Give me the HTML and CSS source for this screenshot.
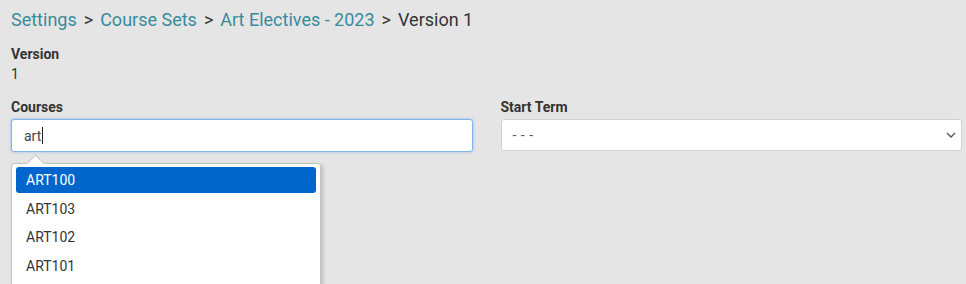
FILE: index.html
```html
<!DOCTYPE html>
<html lang="en">
<head>
<meta charset="utf-8">
<title>Version 1</title>
<link rel="stylesheet" href="styles.css">
</head>
<body>
<div class="page">
  <nav class="crumbs">
    <a class="crumb-link" href="#">Settings</a><span class="sep">&gt;</span><a class="crumb-link" href="#">Course Sets</a><span class="sep">&gt;</span><a class="crumb-link" href="#">Art Electives - 2023</a><span class="sep">&gt;</span><span class="crumb-current">Version 1</span>
  </nav>

  <div class="field-static">
    <div class="label">Version</div>
    <div class="value">1</div>
  </div>

  <div class="row">
    <div class="col">
      <div class="label">Courses</div>
      <div class="combo">
        <div class="text-input focused"><span class="typed">art</span><span class="caret"></span></div>
        <div class="menu">
          <div class="menu-arrow"></div>
          <ul class="menu-list">
            <li class="menu-item active">ART100</li>
            <li class="menu-item">ART103</li>
            <li class="menu-item">ART102</li>
            <li class="menu-item">ART101</li>
          </ul>
        </div>
      </div>
    </div>
    <div class="col">
      <div class="label">Start Term</div>
      <div class="select">
        <span class="select-text">- - -</span>
        <svg class="chevron" width="10" height="6" viewBox="0 0 10 6"><path d="M1 1 L5 5 L9 1" fill="none" stroke="#555" stroke-width="1.3"/></svg>
      </div>
    </div>
  </div>
</div>
</body>
</html>
```
FILE: styles.css
```css
html, body {
  margin: 0;
  padding: 0;
  background: #e5e5e5;
}
body {
  font-family: Roboto, "Liberation Sans", Arial, sans-serif;
  color: #333;
  width: 966px;
  height: 284px;
  overflow: hidden;
}
.page {
  padding: 8px 4px 0 11px;
}
.crumbs {
  font-size: 18px;
  line-height: 24px;
  white-space: nowrap;
}
.crumb-link {
  color: #3a8a9c;
  text-decoration: none;
}
.sep {
  color: #333;
  margin: 0 7px;
}
.crumb-current {
  color: #333;
}
.field-static {
  margin-top: 12px;
}
.label {
  font-size: 14px;
  line-height: 20px;
  font-weight: bold;
  color: #333;
}
.value {
  font-size: 14px;
  line-height: 20px;
}
.row {
  display: flex;
  gap: 28px;
  margin-top: 13px;
}
.col {
  flex: 1 1 0;
  min-width: 0;
}
.col .label {
  margin-bottom: 2px;
}
.combo {
  position: relative;
}
.text-input {
  height: 31px;
  box-sizing: content-box;
  border: 1px solid #7fb5ef;
  border-radius: 3px;
  background: #fff;
  box-shadow: 0 0 3px rgba(80, 150, 230, 0.55);
  display: flex;
  align-items: center;
  padding: 0 12px;
  font-size: 14px;
  color: #444;
}
.caret {
  display: inline-block;
  width: 1px;
  height: 17px;
  background: #222;
  margin-left: 1px;
}
.menu {
  position: absolute;
  left: 0;
  top: 44px;
  width: 300px;
  background: #fff;
  border: 1px solid #c4c4c4;
  border-radius: 3px;
  box-shadow: 2px 2px 4px rgba(0, 0, 0, 0.18);
  padding: 3px 4px 12px 4px;
  z-index: 10;
}
.menu-arrow {
  position: absolute;
  left: 17px;
  top: -7px;
  width: 12px;
  height: 12px;
  background: #fff;
  border-left: 1px solid #c4c4c4;
  border-top: 1px solid #c4c4c4;
  transform: rotate(45deg);
}
.menu-list {
  list-style: none;
  margin: 0;
  padding: 0;
  position: relative;
}
.menu-item {
  height: 26px;
  line-height: 26px;
  padding: 0 10px;
  font-size: 14px;
  color: #333;
  border-radius: 3px;
  margin-bottom: 2.7px;
}
.menu-item.active {
  background: #0066cc;
  color: #fff;
}
.select {
  height: 30px;
  border: 1px solid #d0d0d0;
  border-radius: 3px;
  background: #fff;
  display: flex;
  align-items: center;
  justify-content: space-between;
  padding: 0 5px 0 11px;
  font-size: 14px;
  color: #555;
}
.select-text {
  letter-spacing: 0.5px;
}
.chevron {
  display: block;
}
```
